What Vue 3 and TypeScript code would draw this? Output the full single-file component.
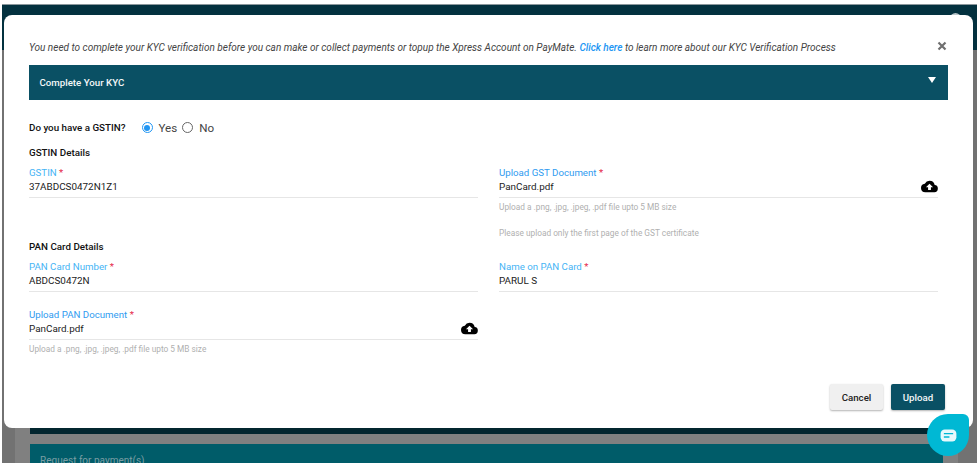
<script setup lang="ts">
interface Field {
  label: string
  value: string
  tone?: string
  upload?: boolean
  hints?: string[]
}
const rows: { title: string; cls: string; fields: Field[] }[] = [
  {
    title: 'GSTIN Details',
    cls: 'row-gst',
    fields: [
      { label: 'GSTIN', value: '37ABDCS0472N1Z1', tone: 'light' },
      {
        label: 'Upload GST Document',
        value: 'PanCard.pdf',
        upload: true,
        hints: [
          'Upload a .png, .jpg, .jpeg, .pdf file upto 5 MB size',
          'Please upload only the first page of the GST certificate',
        ],
      },
    ],
  },
  {
    title: 'PAN Card Details',
    cls: 'row-pan',
    fields: [
      { label: 'PAN Card Number', value: 'ABDCS0472N', tone: 'light' },
      { label: 'Name on PAN Card', value: 'PARUL S', tone: 'light' },
    ],
  },
]
const panDoc: Field = {
  label: 'Upload PAN Document',
  value: 'PanCard.pdf',
  upload: true,
  hints: ['Upload a .png, .jpg, .jpeg, .pdf file upto 5 MB size'],
}
</script>

<template>
  <div class="page">
    <div class="backdrop-page">
      <div class="topbar"></div>
      <div class="under">
        <div class="under-dark"></div>
        <div class="under-teal">Request for payment(s)</div>
      </div>
    </div>
    <div class="avatar"></div>

    <div class="modal">
      <div class="intro">
        <p>
          You need to complete your KYC verification before you can make or collect payments or topup the Xpress Account on PayMate.
          <a class="link">Click here</a> to learn more about our KYC Verification Process
        </p>
        <svg class="close" viewBox="0 0 10 10" width="10" height="10"><path d="M1.5 1.5l7 7M8.5 1.5l-7 7" stroke="#6f6f6f" stroke-width="2.2" fill="none" /></svg>
      </div>

      <div class="banner">
        <span>Complete Your KYC</span>
        <i class="caret"></i>
      </div>

      <div class="question">
        <b>Do you have a GSTIN?</b>
        <span class="radio on"></span><span class="opt">Yes</span>
        <span class="radio"></span><span class="opt">No</span>
      </div>

      <template v-for="row in rows" :key="row.title">
        <div class="section">{{ row.title }}</div>
        <div class="grid" :class="row.cls">
          <div v-for="f in row.fields" :key="f.label" class="field">
            <label :class="f.tone">{{ f.label }} <em>*</em></label>
            <div class="input">
              <span>{{ f.value }}</span>
              <svg v-if="f.upload" class="cloud" viewBox="0 0 24 24" width="17" height="17"><path d="M19.35 10.04A7.49 7.49 0 0 0 12 4a7.5 7.5 0 0 0-6.65 4.04A6 6 0 0 0 6 20h13a5 5 0 0 0 .35-9.96zM14 13v4h-4v-4H7l5-5 5 5h-3z" /></svg>
            </div>
            <p v-for="h in f.hints" :key="h" class="hint">{{ h }}</p>
          </div>
        </div>
      </template>

      <div class="grid row-doc">
        <div class="field">
          <label>{{ panDoc.label }} <em>*</em></label>
          <div class="input">
            <span>{{ panDoc.value }}</span>
            <svg class="cloud" viewBox="0 0 24 24" width="17" height="17"><path d="M19.35 10.04A7.49 7.49 0 0 0 12 4a7.5 7.5 0 0 0-6.65 4.04A6 6 0 0 0 6 20h13a5 5 0 0 0 .35-9.96zM14 13v4h-4v-4H7l5-5 5 5h-3z" /></svg>
          </div>
          <p v-for="h in panDoc.hints" :key="h" class="hint">{{ h }}</p>
        </div>
      </div>

      <div class="actions">
        <button class="btn cancel">Cancel</button>
        <button class="btn upload">Upload</button>
      </div>
    </div>

    <div class="chat">
      <svg viewBox="0 0 18 14" width="17" height="13"><rect x="0.5" y="0.5" width="17" height="13" rx="4.5" fill="#e6f9fc" /><path d="M4 5h10M4 8.6h6" stroke="#00b8d4" stroke-width="1.5" /></svg>
    </div>
  </div>
</template>

<style>
html, body { margin: 0; background: #fff; }
</style>

<style scoped>
.page {
  position: relative;
  width: 979px;
  height: 465px;
  overflow: hidden;
  background: #fff;
  font-family: Roboto, "Liberation Sans", sans-serif;
}
.backdrop-page {
  margin: 4px 2px 0;
  height: 459px;
  background: linear-gradient(90deg, #727272 13px, #808080 13px, #808080 956px, #727272 956px);
  display: flex;
  flex-direction: column;
  border-top: 1px solid #8b979c;
  box-sizing: border-box;
}
.topbar { height: 45px; background: #03313f; }
.under { margin-top: 378px; padding: 0 34px 0 28px; }
.under-dark { height: 6px; background: #03262f; }
.under-teal {
  margin-top: 10px;
  height: 19px;
  background: #005c69;
  color: #7a9ea4;
  font-size: 10px;
  padding: 11px 0 0 10px;
  box-sizing: border-box;
  overflow: hidden;
}
.avatar {
  position: absolute;
  left: 950px;
  top: 13px;
  width: 11px;
  height: 11px;
  border-radius: 50%;
  background: #b9c6ca;
}
.modal {
  position: absolute;
  left: 4px;
  top: 15px;
  width: 969px;
  height: 413px;
  background: #fff;
  border-radius: 8px;
  box-sizing: border-box;
  padding: 26px 25px 0;
  color: #222;
}
.intro {
  display: flex;
  align-items: center;
  justify-content: space-between;
  height: 12px;
}
.intro p {
  margin: 0;
  font-size: 10.02px;
  font-style: italic;
  color: #444;
  white-space: nowrap;
}
.link { color: #2196f3; font-weight: 500; }
.close { margin-right: 1px; margin-top: -3px; }
.banner {
  margin-top: 12px;
  width: 919px;
  height: 35px;
  background: #0a5064;
  color: #f4f7f8;
  font-size: 9.7px;
  font-weight: 500;
  display: flex;
  align-items: center;
  justify-content: space-between;
  padding: 0 12px 0 10.5px;
  box-sizing: border-box;
}
.caret {
  width: 0;
  height: 0;
  border-left: 4px solid transparent;
  border-right: 4px solid transparent;
  border-top: 6px solid #fff;
  margin-top: -5px;
}
.question {
  margin-top: 20px;
  height: 15px;
  display: flex;
  align-items: center;
  font-size: 11.6px;
  color: #444;
}
.question b { width: 112.5px; font-size: 9.8px; font-weight: 500; color: #111; }
.radio {
  width: 9px;
  height: 9px;
  border: 1px solid #666;
  border-radius: 50%;
  margin-right: 6px;
  display: block;
}
.radio.on {
  border-color: #2196f3;
  position: relative;
}
.radio.on::after {
  content: "";
  position: absolute;
  inset: 1.5px;
  border-radius: 50%;
  background: #2196f3;
}
.opt { margin-right: 5px; }
.section {
  font-size: 9.8px;
  font-weight: 500;
  color: #111;
  margin-top: 11px;
  height: 13px;
  line-height: 13px;
}
.grid {
  display: grid;
  grid-template-columns: 449px 439px;
  column-gap: 21px;
  margin-top: 7px;
}
.row-gst { height: 63px; }
.row-pan { height: 48px; }
.row-doc { height: 76px; margin-top: 0; }
.field { min-width: 0; }
.field label {
  display: block;
  font-size: 9.7px;
  line-height: 13px;
  color: #2f9bf0;
  height: 12px;
}
.field label.light { color: #45b4f5; }
em { color: #e5294a; font-style: normal; }
.input {
  display: flex;
  align-items: center;
  justify-content: space-between;
  height: 20px;
  font-size: 9.9px;
  color: #222;
  border-bottom: 1px solid #e6e6e6;
  box-sizing: border-box;
  padding-bottom: 2px;
}
.cloud { fill: #000; }
.hint {
  margin: 4px 0 16px;
  font-size: 8.3px;
  line-height: 10px;
  color: #b0b0b0;
}
.actions {
  display: flex;
  justify-content: flex-end;
  gap: 8px;
  padding-right: 3px;
}
.btn {
  height: 26px;
  border: 0;
  border-radius: 2px;
  font-family: inherit;
  font-size: 9.7px;
  font-weight: 500;
  padding: 0;
  box-shadow: 0 1px 2px rgba(0, 0, 0, 0.3);
}
.cancel { width: 53px; background: #f0f0f0; color: #222; }
.upload { width: 54px; background: #0a5064; color: #f4f7f8; }
.chat {
  position: absolute;
  left: 927px;
  top: 414px;
  width: 42px;
  height: 42px;
  background: #00b8d4;
  border-radius: 50% 6px 50% 50%;
  display: flex;
  align-items: center;
  justify-content: center;
}
</style>
